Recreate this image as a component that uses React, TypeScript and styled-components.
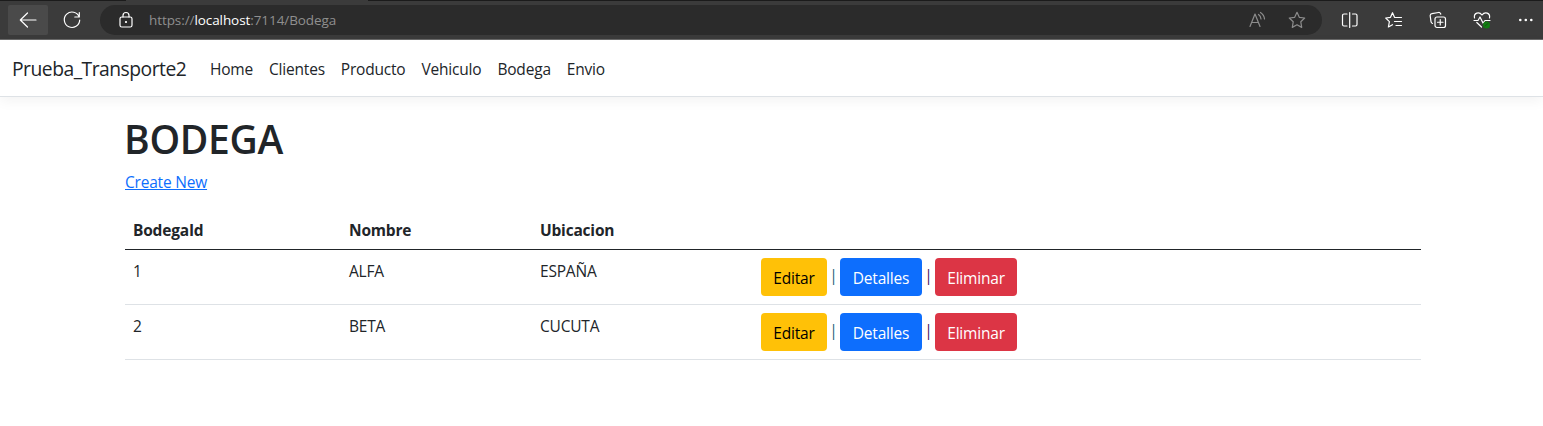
import React from "react";
import styled, { createGlobalStyle } from "styled-components";

const GlobalStyle = createGlobalStyle`
  *, *::before, *::after { box-sizing: border-box; }
  body {
    margin: 0;
    background: #fff;
    color: #212529;
    font-family: "Open Sans", "Noto Sans", sans-serif;
    font-size: 15.5px;
    letter-spacing: -0.2px;
    line-height: 24px;
  }
`;

const Toolbar = styled.div`
  display: flex;
  align-items: center;
  height: 40px;
  padding: 1px 0 0 8px;
  background:
    linear-gradient(to right, #1b1b1b 126px, #3b3b3b 126px, #3b3b3b 368px, #1b1b1b 368px) top / 100% 1px no-repeat,
    #3b3b3b;
  border-bottom: 1px solid #6a6a6a;
`;

const ToolButton = styled.button<{ $active?: boolean }>`
  display: flex;
  align-items: center;
  justify-content: center;
  width: 40px;
  height: 30px;
  margin: 0 4px 0 0;
  padding: 0;
  border: 0;
  border-radius: 2px;
  color: #fff;
  background: ${(p) => (p.$active ? "#4a4a4a" : "transparent")};
`;

const AddressBar = styled.div`
  display: flex;
  align-items: center;
  flex: none;
  width: 1222px;
  height: 30px;
  margin-left: 4px;
  padding: 0 15px 0 16px;
  border-radius: 15px;
  background: #2b2b2b;
  color: #fff;
`;

const Url = styled.span`
  flex: 1;
  margin-left: 13px;
  font-size: 13.5px;
  letter-spacing: -0.08px;
  color: #8f8f8f;
`;

const Host = styled.span`
  color: #fff;
`;

const AddressActions = styled.div`
  display: flex;
  gap: 20px;
  color: #8c8c8c;
`;

const Tools = styled.div`
  display: flex;
  align-items: center;
  gap: 24px;
  margin-left: 18px;
  color: #fff;
`;

const Icon = styled.svg`
  display: block;
  flex: none;
  width: 20px;
  height: 20px;
  fill: none;
  stroke: currentColor;
  stroke-width: 1.2;
  stroke-linecap: round;
  stroke-linejoin: round;
`;

const Navbar = styled.nav`
  display: flex;
  align-items: center;
  height: 57px;
  padding: 2px 12px 0;
  border-bottom: 1px solid #dee2e6;
  box-shadow: 0 4px 12px rgba(0, 0, 0, 0.05);
`;

const Brand = styled.a`
  width: 190px;
  font-size: 19.3px;
  letter-spacing: -0.5px;
  white-space: nowrap;
`;

const NavLink = styled.a`
  padding: 0 8px;
`;

const Page = styled.main`
  width: 1296px;
  margin: 18px 0 0 125px;
`;

const Title = styled.h1`
  margin: 0 0 8px -1px;
  font-size: 39px;
  letter-spacing: -0.3px;
  line-height: 47px;
  font-weight: 600;
`;

const CreateLink = styled.a`
  display: block;
  width: fit-content;
  color: #0d6efd;
  text-decoration: underline;
`;

const Table = styled.table`
  width: 100%;
  margin-top: 15px;
  border-collapse: separate;
  border-spacing: 0;
  table-layout: fixed;
`;

const HeadCell = styled.th<{ $width?: number }>`
  width: ${(p) => (p.$width ? `${p.$width}px` : "auto")};
  height: 41px;
  padding: 2px 8px 0;
  border-bottom: 1px solid #212529;
  text-align: left;
  font-weight: 700;
`;

const Cell = styled.td<{ $text?: boolean }>`
  height: 55px;
  padding: ${(p) => (p.$text ? "9px 8px 7px" : "8px")};
  border-bottom: 1px solid #dee2e6;
  vertical-align: top;
`;

const Actions = styled.div`
  display: flex;
  align-items: center;
`;

const Action = styled.button<{ $bg: string; $fg: string; $width: number }>`
  width: ${(p) => p.$width}px;
  height: 38px;
  padding: 2px 0 0;
  border: 0;
  border-radius: 4px;
  background: ${(p) => p.$bg};
  color: ${(p) => p.$fg};
  font: inherit;
  letter-spacing: inherit;
`;

const Separator = styled.span<{ $color: string }>`
  width: 13px;
  padding-bottom: 4px;
  text-align: center;
  color: ${(p) => p.$color};
`;

const links = ["Home", "Clientes", "Producto", "Vehiculo", "Bodega", "Envio"];
const rows = [
  { id: 1, nombre: "ALFA", ubicacion: "ESPAÑA" },
  { id: 2, nombre: "BETA", ubicacion: "CUCUTA" },
];

export default function App() {
  return (
    <>
      <GlobalStyle />
      <Toolbar>
        <ToolButton $active>
          <Icon viewBox="0 0 20 20"><path d="M18 10H2.5M9.5 3 2.3 10l7.2 7" /></Icon>
        </ToolButton>
        <ToolButton>
          <Icon viewBox="0 0 20 20"><path d="M17.2 7A7.7 7.7 0 1 0 17.7 10M17.3 2.5V7h-4.5" /></Icon>
        </ToolButton>
        <AddressBar>
          <Icon viewBox="0 0 20 20">
            <rect x="4" y="7" width="12" height="10" rx="1.8" />
            <path d="M7 7V5.5a3 3 0 0 1 6 0V7" />
            <circle cx="10" cy="12" r=".5" fill="currentColor" />
          </Icon>
          <Url>https://<Host>localhost</Host>:7114/Bodega</Url>
          <AddressActions>
            <Icon viewBox="0 0 20 20">
              <path d="M3 16.500 8 4l5 12.500M4.700 12.500h6.600M11.500 4.500q2.300 1.500 2.500 4.500M13.500 2.500q3.700 2.500 4 6.500" />
            </Icon>
            <Icon viewBox="0 0 20 20">
              <path d="m10 2.300 2.300 5 5.400.7-3.900 3.800.9 5.600-4.700-2.600-4.700 2.600.9-5.600L2.300 8l5.400-.7z" />
            </Icon>
          </AddressActions>
        </AddressBar>
        <Tools>
          <Icon viewBox="0 0 20 20">
            <path d="M7 4H4a1.500 1.500 0 0 0-1.500 1.500v9A1.500 1.500 0 0 0 4 16h3M12.500 4H15.500a1.500 1.500 0 0 1 1.500 1.500v9A1.500 1.500 0 0 1 15.500 16h-3M9.700 2.500v15" />
          </Icon>
          <Icon viewBox="0 0 20 20">
            <path d="M11.500 7.500 10.500 7.300 8.500 2.700 6.500 7.300l-4.800.7 3.700 3.600-1 5.400 4.100-2.300M12 7.500h5.500M10.500 11.500h7M12 15.500h5.500" />
          </Icon>
          <Icon viewBox="0 0 20 20">
            <rect x="7" y="7" width="10.500" height="10.500" rx="2" />
            <path d="M12.250 9.500v5.500M9.500 12.250H15M4.500 13.500A2 2 0 0 1 3 11.600L2.200 6a2 2 0 0 1 1.700-2.300L10.500 2.500a2 2 0 0 1 2.300 1.700" />
          </Icon>
          <Icon viewBox="0 0 20 20">
            <path d="M2.500 8C1.500 3 7 1 10 5c3-4 8.500-2 7.500 3M2 10.500h4L8 7l3 6 2-2.500H18M4.800 12.500 9.500 17" />
            <circle cx="14.500" cy="15" r="3.500" fill="#107c10" stroke="none" />
            <path d="m13 16 3-2.500" stroke="#174d17" strokeWidth=".9" />
          </Icon>
          <Icon viewBox="0 0 20 20">
            <g fill="currentColor" stroke="none">
              <circle cx="4.300" cy="10" r="1.300" /><circle cx="9.800" cy="10" r="1.300" /><circle cx="15.300" cy="10" r="1.300" />
            </g>
          </Icon>
        </Tools>
      </Toolbar>
      <Navbar>
        <Brand>Prueba_Transporte2</Brand>
        {links.map((label) => <NavLink key={label}>{label}</NavLink>)}
      </Navbar>
      <Page>
        <Title>BODEGA</Title>
        <CreateLink>Create New</CreateLink>
        <Table>
          <thead>
            <tr>
              <HeadCell $width={216}>BodegaId</HeadCell>
              <HeadCell $width={191}>Nombre</HeadCell>
              <HeadCell $width={221}>Ubicacion</HeadCell>
              <HeadCell />
            </tr>
          </thead>
          <tbody>
            {rows.map((row) => (
              <tr key={row.id}>
                <Cell $text>{row.id}</Cell>
                <Cell $text>{row.nombre}</Cell>
                <Cell $text>{row.ubicacion}</Cell>
                <Cell>
                  <Actions>
                    <Action $bg="#ffc107" $fg="#000" $width={66}>Editar</Action>
                    <Separator $color="#1f5f80">|</Separator>
                    <Action $bg="#0d6efd" $fg="#fff" $width={82}>Detalles</Action>
                    <Separator $color="#45145f">|</Separator>
                    <Action $bg="#dc3545" $fg="#fff" $width={82}>Eliminar</Action>
                  </Actions>
                </Cell>
              </tr>
            ))}
          </tbody>
        </Table>
      </Page>
    </>
  );
}
